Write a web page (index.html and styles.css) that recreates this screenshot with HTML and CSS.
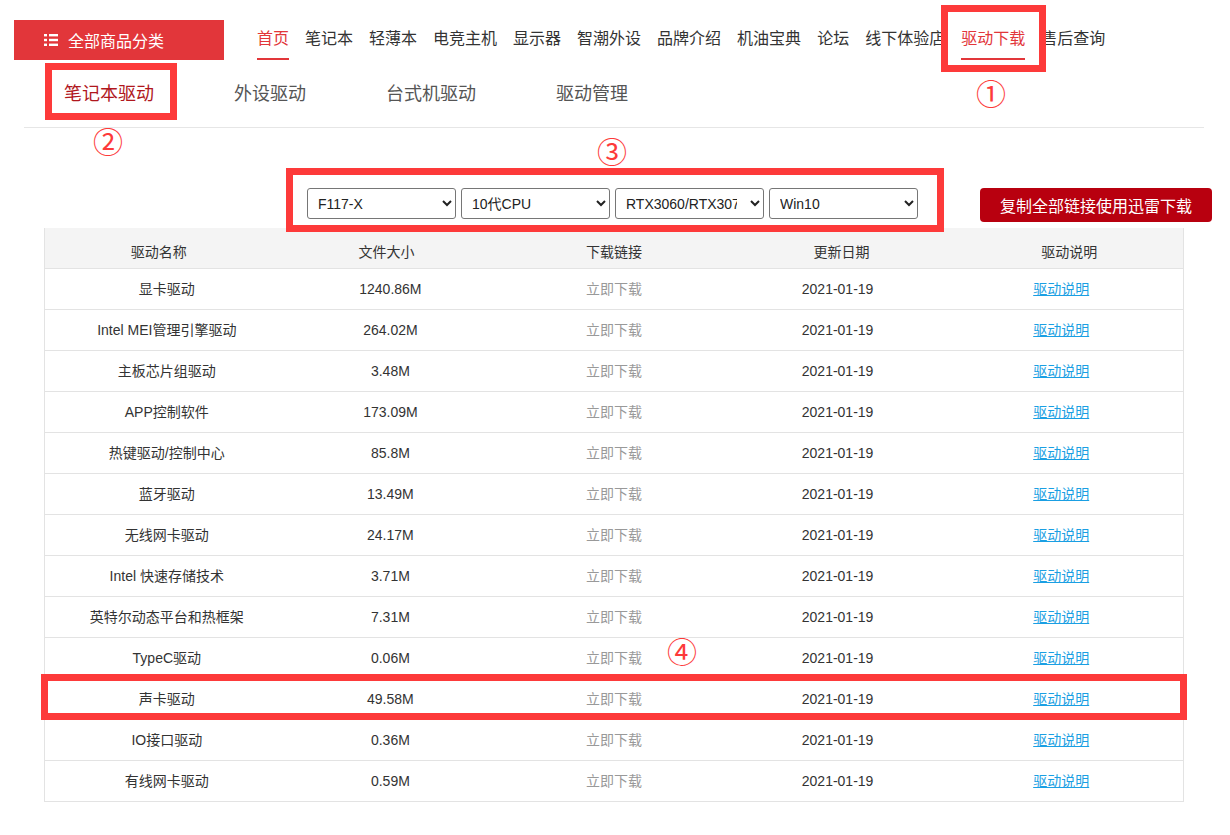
FILE: index.html
```html
<!DOCTYPE html>
<html lang="zh-CN">
<head>
<meta charset="utf-8">
<title>驱动下载</title>
<link rel="stylesheet" href="styles.css">
</head>
<body>
<div class="page">
  <header class="header">
    <div class="cat-btn">
      <svg class="list-icon" width="14" height="12" viewBox="0 0 14 12">
        <rect x="0" y="0" width="3" height="2.4" fill="#fff"/>
        <rect x="5" y="0" width="9" height="2.4" fill="#fff"/>
        <rect x="0" y="4.8" width="3" height="2.4" fill="#fff"/>
        <rect x="5" y="4.8" width="9" height="2.4" fill="#fff"/>
        <rect x="0" y="9.6" width="3" height="2.4" fill="#fff"/>
        <rect x="5" y="9.6" width="9" height="2.4" fill="#fff"/>
      </svg>
      <span>全部商品分类</span>
    </div>
    <nav class="nav">
      <a class="active">首页</a>
      <a>笔记本</a>
      <a>轻薄本</a>
      <a>电竞主机</a>
      <a>显示器</a>
      <a>智潮外设</a>
      <a>品牌介绍</a>
      <a>机油宝典</a>
      <a>论坛</a>
      <a>线下体验店</a>
      <a class="active">驱动下载</a>
      <a>售后查询</a>
    </nav>
  </header>

  <div class="tabs">
    <span class="tab current">笔记本驱动</span>
    <span class="tab">外设驱动</span>
    <span class="tab">台式机驱动</span>
    <span class="tab">驱动管理</span>
  </div>

  <div class="filters">
    <div class="selects">
      <select><option>F117-X</option></select>
      <select><option>10代CPU</option></select>
      <select><option>RTX3060/RTX3070</option></select>
      <select><option>Win10</option></select>
    </div>
    <button class="copy-btn">复制全部链接使用迅雷下载</button>
  </div>

  <div class="table">
    <div class="thead">
      <span>驱动名称</span><span>文件大小</span><span>下载链接</span><span>更新日期</span><span>驱动说明</span>
    </div>
    <div class="row"><span>显卡驱动</span><span>1240.86M</span><span class="dl">立即下载</span><span>2021-01-19</span><span><a class="doc">驱动说明</a></span></div>
    <div class="row"><span>Intel MEI管理引擎驱动</span><span>264.02M</span><span class="dl">立即下载</span><span>2021-01-19</span><span><a class="doc">驱动说明</a></span></div>
    <div class="row"><span>主板芯片组驱动</span><span>3.48M</span><span class="dl">立即下载</span><span>2021-01-19</span><span><a class="doc">驱动说明</a></span></div>
    <div class="row"><span>APP控制软件</span><span>173.09M</span><span class="dl">立即下载</span><span>2021-01-19</span><span><a class="doc">驱动说明</a></span></div>
    <div class="row"><span>热键驱动/控制中心</span><span>85.8M</span><span class="dl">立即下载</span><span>2021-01-19</span><span><a class="doc">驱动说明</a></span></div>
    <div class="row"><span>蓝牙驱动</span><span>13.49M</span><span class="dl">立即下载</span><span>2021-01-19</span><span><a class="doc">驱动说明</a></span></div>
    <div class="row"><span>无线网卡驱动</span><span>24.17M</span><span class="dl">立即下载</span><span>2021-01-19</span><span><a class="doc">驱动说明</a></span></div>
    <div class="row"><span>Intel 快速存储技术</span><span>3.71M</span><span class="dl">立即下载</span><span>2021-01-19</span><span><a class="doc">驱动说明</a></span></div>
    <div class="row"><span>英特尔动态平台和热框架</span><span>7.31M</span><span class="dl">立即下载</span><span>2021-01-19</span><span><a class="doc">驱动说明</a></span></div>
    <div class="row"><span>TypeC驱动</span><span>0.06M</span><span class="dl">立即下载</span><span>2021-01-19</span><span><a class="doc">驱动说明</a></span></div>
    <div class="row"><span>声卡驱动</span><span>49.58M</span><span class="dl">立即下载</span><span>2021-01-19</span><span><a class="doc">驱动说明</a></span></div>
    <div class="row"><span>IO接口驱动</span><span>0.36M</span><span class="dl">立即下载</span><span>2021-01-19</span><span><a class="doc">驱动说明</a></span></div>
    <div class="row"><span>有线网卡驱动</span><span>0.59M</span><span class="dl">立即下载</span><span>2021-01-19</span><span><a class="doc">驱动说明</a></span></div>
  </div>

  <div class="mark box1"></div>
  <div class="mark box2"></div>
  <div class="mark box3"></div>
  <div class="mark box4"></div>
  <span class="num num1">①</span>
  <span class="num num2">②</span>
  <span class="num num3">③</span>
  <span class="num num4">④</span>
</div>
</body>
</html>
```

FILE: styles.css
```css
html, body {
  margin: 0;
  padding: 0;
  background: #fff;
}

body {
  font-family: "Liberation Sans", "Noto Sans CJK SC", sans-serif;
  color: #333;
}

.page {
  position: relative;
  width: 1230px;
  height: 835px;
  overflow: hidden;
}

/* ---------- header ---------- */
.header {
  display: flex;
  align-items: flex-start;
  padding: 20px 0 0 14px;
  height: 40px;
}

.cat-btn {
  width: 210px;
  height: 40px;
  box-sizing: border-box;
  background: #e2363a;
  color: #fff;
  display: flex;
  align-items: center;
  gap: 10px;
  padding-left: 30px;
  font-size: 16px;
  font-family: "Noto Sans CJK SC", sans-serif;
}

.list-icon {
  display: block;
}

.nav {
  display: flex;
  gap: 16px;
  margin-left: 33px;
  font-family: "Noto Sans CJK SC", sans-serif;
}

.nav a {
  display: block;
  height: 40px;
  box-sizing: border-box;
  line-height: 35px;
  font-size: 16px;
  color: #333;
  border-bottom: 2px solid transparent;
  white-space: nowrap;
}

.nav a.active {
  color: #e2363a;
  border-bottom-color: #e2363a;
}

/* ---------- tabs ---------- */
.tabs {
  display: flex;
  align-items: center;
  gap: 80px;
  margin-left: 24px;
  width: 1180px;
  height: 68px;
  padding: 0 0 4px 40px;
  box-sizing: border-box;
  border-bottom: 1px solid #e6e6e6;
  font-family: "Noto Sans CJK SC", sans-serif;
  font-size: 18px;
  color: #555;
}

.tabs .tab.current {
  color: #b0171d;
}

/* ---------- filters ---------- */
.filters {
  display: flex;
  align-items: flex-start;
  padding: 60px 0 0 307px;
}

.selects {
  display: flex;
  gap: 5px;
}

.selects select {
  width: 149px;
  height: 31px;
  font-family: "Liberation Sans", "Noto Sans CJK SC", sans-serif;
  font-size: 14px;
  color: #222;
  padding-left: 6px;
  padding-right: 10px;
  border: 1px solid #767676;
  border-radius: 3px;
  background: #fff;
}

.copy-btn {
  margin-left: 62px;
  height: 34px;
  padding: 0 20px;
  border: none;
  border-radius: 4px;
  background: #b8000f;
  color: #fff;
  font-family: "Noto Sans CJK SC", sans-serif;
  font-size: 16px;
  line-height: 34px;
}

/* ---------- table ---------- */
.table {
  margin: 6px 0 0 44px;
  width: 1140px;
  box-sizing: border-box;
  border: 1px solid #e3e3e3;
  border-top: none;
  font-size: 14px;
}

.thead {
  display: grid;
  grid-template-columns: repeat(5, 1fr);
  height: 40px;
  box-sizing: border-box;
  padding-top: 8px;
  background: #f4f4f4;
  line-height: 32px;
  text-align: center;
  color: #333;
}

.row {
  display: grid;
  grid-template-columns: repeat(5, 1fr);
  height: 41px;
  box-sizing: border-box;
  padding: 0 10px;
  border-top: 1px solid #e3e3e3;
  line-height: 40px;
  text-align: center;
  color: #333;
}

.row span {
  white-space: nowrap;
}

.row .dl {
  color: #999;
}

.row .doc {
  color: #1a9fe3;
  text-decoration: underline;
}

/* ---------- annotation overlays ---------- */
.mark {
  position: absolute;
  box-sizing: border-box;
  border: 7px solid #fd3a3a;
}

.box1 { left: 941px; top: 5px; width: 105px; height: 67px; }
.box2 { left: 45px; top: 63px; width: 132px; height: 57px; }
.box3 { left: 286px; top: 168px; width: 658px; height: 64px; }
.box4 { left: 41px; top: 674px; width: 1146px; height: 46px; }

.num {
  position: absolute;
  transform: translate(-50%, -50%);
  font-family: "Noto Sans CJK SC", sans-serif;
  font-size: 30px;
  line-height: 1;
  color: #fd3a3a;
}

.num1 { left: 991px; top: 92px; }
.num2 { left: 108px; top: 140px; }
.num3 { left: 612px; top: 150px; }
.num4 { left: 682px; top: 650px; }
```
